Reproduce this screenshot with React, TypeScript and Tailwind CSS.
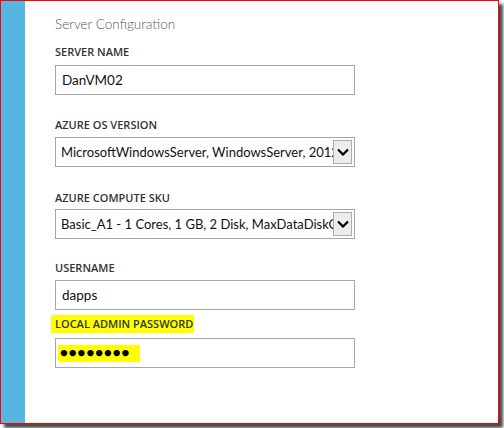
import { ReactNode } from "react";

const labelFont = { fontFamily: '"Open Sans", "Noto Sans", sans-serif' };
const bodyFont = { fontFamily: 'Lato, "Open Sans", sans-serif' };

function Label({ children, highlight }: { children: ReactNode; highlight?: boolean }) {
  return (
    <div className="h-[18px] flex items-center" style={labelFont}>
      <span
        className={
          "text-[11px] font-semibold text-[#333] leading-[18px] " +
          (highlight ? "bg-[#ffff00] -ml-[4px] pl-[4px] pr-[1px]" : "")
        }
      >
        {children}
      </span>
    </div>
  );
}

function TextBox({ value, password }: { value: string; password?: boolean }) {
  return (
    <div className="w-[300px] h-[30px] border border-[#a6a6a6] bg-white flex items-center px-[6px]" style={bodyFont}>
      {password ? (
        <span className="bg-[#ffff00] h-[17px] flex items-center px-[2px] -ml-[4px] w-[82px] text-[13px] tracking-[1px] text-black">
          ●●●●●●●●
        </span>
      ) : (
        <span className="text-[13.5px] text-[#111]">{value}</span>
      )}
    </div>
  );
}

function Chevron() {
  return (
    <svg width="12" height="8" viewBox="0 0 12 8">
      <path d="M1 1.5 L6 6.5 L11 1.5" fill="none" stroke="#000" strokeWidth="2.2" />
    </svg>
  );
}

function SelectBox({ value }: { value: string }) {
  return (
    <div className="w-[300px] h-[30px] border border-[#a6a6a6] bg-white flex items-center pl-[5px] pr-[2px]" style={bodyFont}>
      <div className="flex-1 overflow-hidden whitespace-nowrap text-[13px] text-[#111] leading-[28px]">{value}</div>
      <div className="w-[19px] h-[24px] border border-[#adadad] bg-[#ececec] flex items-center justify-center">
        <Chevron />
      </div>
    </div>
  );
}

export default function App() {
  return (
    <div className="w-[504px] h-[428px] bg-white overflow-hidden">
      <div className="w-[499px] h-[424px] border border-[#ff0000] flex shadow-[4px_4px_3px_rgba(40,40,40,0.85)] bg-white">
        <div className="w-[24px] bg-[#55b6e1]" />
        <div className="flex-1 pl-[30px] pt-[13px]">
          <div className="text-[13.5px] font-light text-[#555] leading-[20px]" style={bodyFont}>
            Server Configuration
          </div>
          <div className="mt-[9px]">
            <Label>SERVER NAME</Label>
          </div>
          <div className="mt-[4px]">
            <TextBox value="DanVM02" />
          </div>
          <div className="mt-[21px]">
            <Label>AZURE OS VERSION</Label>
          </div>
          <div className="mt-[3px]">
            <SelectBox value="MicrosoftWindowsServer, WindowsServer, 2012-R2-Datacenter" />
          </div>
          <div className="mt-[22px]">
            <Label>AZURE COMPUTE SKU</Label>
          </div>
          <div className="mt-[2px]">
            <SelectBox value="Basic_A1 - 1 Cores, 1 GB, 2 Disk, MaxDataDiskCount 2" />
          </div>
          <div className="mt-[20px]">
            <Label>USERNAME</Label>
          </div>
          <div className="mt-[3px]">
            <TextBox value="dapps" />
          </div>
          <div className="mt-[5px]">
            <Label highlight>LOCAL ADMIN PASSWORD</Label>
          </div>
          <div className="mt-[5px]">
            <TextBox value="" password />
          </div>
        </div>
      </div>
    </div>
  );
}
